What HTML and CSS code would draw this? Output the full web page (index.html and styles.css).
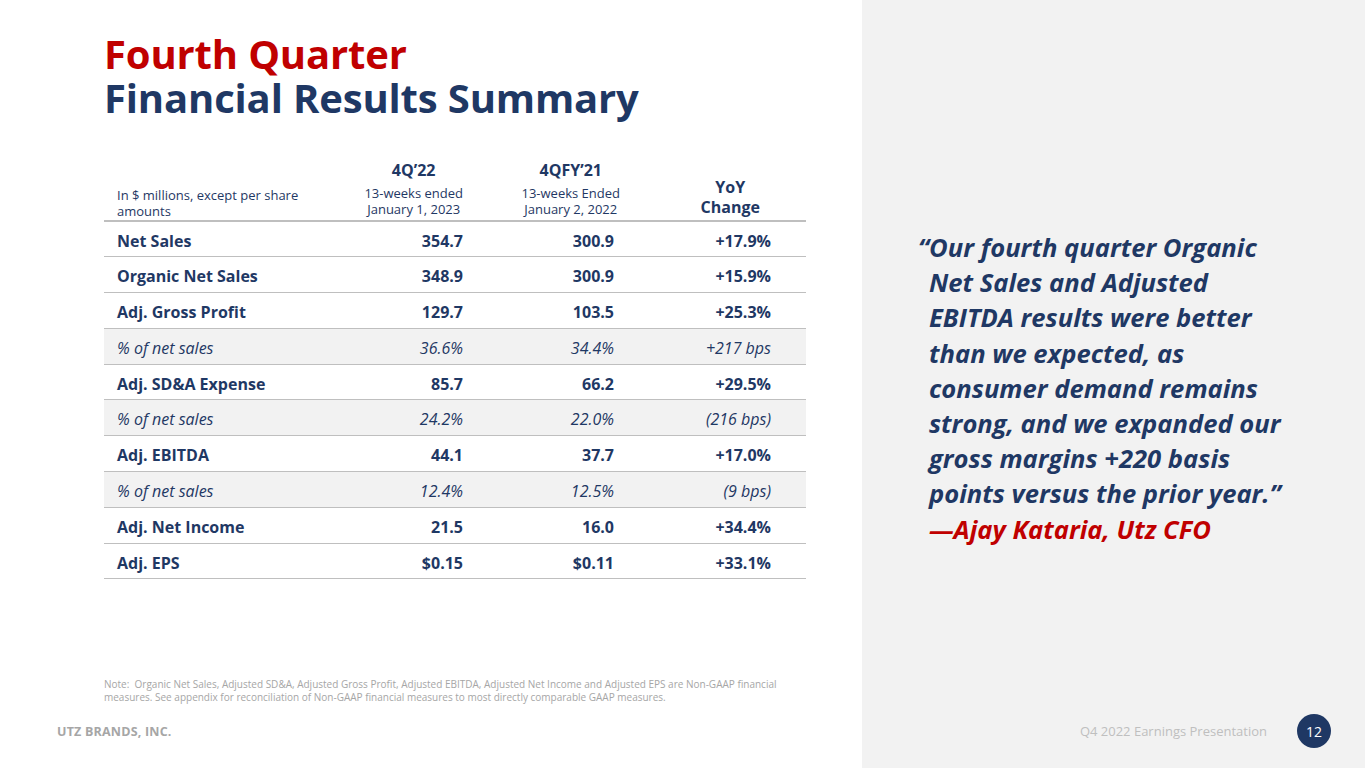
FILE: index.html
```html
<!DOCTYPE html>
<html>
<head>
<meta charset="utf-8">
<link rel="stylesheet" href="styles.css">
</head>
<body>
<div class="slide">
  <div class="main">
    <h1 class="title"><span class="t-line red">Fourth Quarter</span><span class="t-line navy">Financial Results Summary</span></h1>
    <table class="fin">
      <colgroup><col class="w-lbl"><col class="w-c1"><col class="w-c2"><col class="w-c3"></colgroup>
      <thead>
        <tr>
          <th class="h-lbl">In $ millions, except per share<br>amounts</th>
          <th class="h-c1"><div class="hd"><div class="hd-t">4Q’22</div><div class="hd-s">13-weeks ended<br>January 1, 2023</div></div></th>
          <th class="h-c2"><div class="hd"><div class="hd-t">4QFY’21</div><div class="hd-s">13-weeks Ended<br>January 2, 2022</div></div></th>
          <th class="h-c3"><div class="hd"><div class="hd-y">YoY<br>Change</div></div></th>
        </tr>
      </thead>
      <tbody>
        <tr><td>Net Sales</td><td>354.7</td><td>300.9</td><td>+17.9%</td></tr>
        <tr><td>Organic Net Sales</td><td>348.9</td><td>300.9</td><td>+15.9%</td></tr>
        <tr><td>Adj. Gross Profit</td><td>129.7</td><td>103.5</td><td>+25.3%</td></tr>
        <tr class="pct"><td>% of net sales</td><td>36.6%</td><td>34.4%</td><td>+217 bps</td></tr>
        <tr><td>Adj. SD&amp;A Expense</td><td>85.7</td><td>66.2</td><td>+29.5%</td></tr>
        <tr class="pct"><td>% of net sales</td><td>24.2%</td><td>22.0%</td><td>(216 bps)</td></tr>
        <tr><td>Adj. EBITDA</td><td>44.1</td><td>37.7</td><td>+17.0%</td></tr>
        <tr class="pct"><td>% of net sales</td><td>12.4%</td><td>12.5%</td><td>(9 bps)</td></tr>
        <tr><td>Adj. Net Income</td><td>21.5</td><td>16.0</td><td>+34.4%</td></tr>
        <tr><td>Adj. EPS</td><td>$0.15</td><td>$0.11</td><td>+33.1%</td></tr>
      </tbody>
    </table>
    <p class="note">Note:&nbsp; Organic Net Sales, Adjusted SD&amp;A, Adjusted Gross Profit, Adjusted EBITDA, Adjusted Net Income and Adjusted EPS are Non-GAAP financial<br>measures. See appendix for reconciliation of Non-GAAP financial measures to most directly comparable GAAP measures.</p>
    <div class="footer footer-l"><span class="brand">UTZ BRANDS, INC.</span></div>
  </div>
  <div class="side">
    <blockquote class="quote">
      <p class="q-text">“Our fourth quarter Organic<br>Net Sales and Adjusted<br>EBITDA results were better<br>than we expected, as<br>consumer demand remains<br>strong, and we expanded our<br>gross margins +220 basis<br>points versus the prior year.”</p>
      <p class="q-author">—Ajay Kataria, Utz CFO</p>
    </blockquote>
    <div class="footer footer-r"><span class="pres">Q4 2022 Earnings Presentation</span><span class="pnum">12</span></div>
  </div>
</div>
</body>
</html>
```

FILE: styles.css
```css
* { box-sizing: border-box; }
html, body { margin: 0; padding: 0; }
body {
  width: 1365px;
  height: 768px;
  overflow: hidden;
  font-family: "Open Sans", "Noto Sans", sans-serif;
  color: #1f3864;
  background: #ffffff;
}
.slide {
  display: flex;
  width: 1365px;
  height: 768px;
}
.main {
  width: 862px;
  height: 768px;
  display: flex;
  flex-direction: column;
  padding-left: 104px;
  background: #ffffff;
}
.title {
  margin: 32px 0 0 0;
  font-size: 40px;
  line-height: 44px;
  font-weight: 700;
  letter-spacing: -0.15px;
}
.t-line {
  display: block;
  height: 44px;
}
.red { color: #c00000; }
.navy { color: #1f3864; }

.fin {
  margin-top: 38px;
  width: 702px;
  table-layout: fixed;
  border-collapse: collapse;
}
.w-lbl { width: 231px; }
.w-c1 { width: 140px; }
.w-c2 { width: 151px; }
.w-c3 { width: 180px; }

.fin thead th {
  border-bottom: 2px solid #bfbfbf;
  padding: 2px 0 1px 0;
  vertical-align: bottom;
  color: #1f3864;
}
.fin .h-lbl {
  text-align: left;
  padding-left: 13px;
  font-size: 13px;
  line-height: 16px;
  font-weight: 400;
}
.fin .h-c1 { text-align: right; padding-right: 12px; }
.fin .h-c2 { text-align: right; padding-right: 6px; }
.fin .h-c3 { text-align: right; padding-right: 46px; padding-bottom: 2px; }
.hd {
  display: inline-block;
  text-align: center;
}
.hd-t {
  font-size: 16px;
  line-height: 20px;
  font-weight: 700;
  margin-bottom: 5px;
}
.hd-s {
  font-size: 13px;
  line-height: 16px;
  font-weight: 400;
}
.hd-y {
  font-size: 16px;
  line-height: 20px;
  font-weight: 700;
}

.fin tbody td {
  height: 35.8px;
  padding: 3px 12px 0 0;
  border-bottom: 1px solid #bfbfbf;
  font-size: 16px;
  line-height: 22px;
  font-weight: 700;
  text-align: right;
  vertical-align: middle;
  white-space: nowrap;
}
.fin tbody td:first-child {
  text-align: left;
  padding-left: 13px;
}
.fin tbody td:last-child { padding-right: 35px; }
.fin tbody tr.pct td {
  background: #f2f2f2;
  font-weight: 400;
  font-style: italic;
}

.note {
  margin: auto 0 0 0;
  font-size: 10px;
  line-height: 13px;
  color: #a6a6a6;
  white-space: nowrap;
}
.footer {
  height: 34px;
  margin: 10px 0 20px 0;
  display: flex;
  align-items: center;
}
.footer-l { margin-left: -47px; }
.brand {
  font-size: 12.5px;
  font-weight: 700;
  color: #a6a6a6;
  letter-spacing: 0.2px;
}

.side {
  flex: 1;
  height: 768px;
  background: #f2f2f2;
  display: flex;
  flex-direction: column;
  padding-left: 56px;
}
.quote {
  margin: 230px 0 0 0;
  padding-left: 11px;
  font-size: 25.6px;
  line-height: 35.2px;
  font-weight: 700;
  font-style: italic;
}
.q-text {
  margin: 0;
  text-indent: -11px;
  color: #1f3864;
  white-space: nowrap;
}
.q-author {
  margin: 0;
  color: #c00000;
}
.footer-r {
  margin-top: auto;
  justify-content: flex-end;
  padding-right: 34px;
}
.pres {
  font-size: 13px;
  color: #bfbfbf;
  margin-right: 30px;
}
.pnum {
  width: 34px;
  height: 34px;
  border-radius: 50%;
  background: #1f3864;
  color: #ffffff;
  font-size: 14px;
  display: flex;
  align-items: center;
  justify-content: center;
}
```
